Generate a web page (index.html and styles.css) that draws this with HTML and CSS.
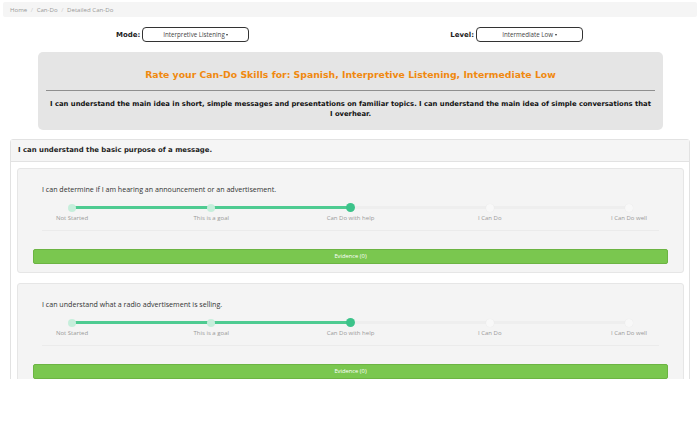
FILE: index.html
```html
<!DOCTYPE html>
<html>
<head>
<meta charset="utf-8">
<link rel="stylesheet" href="styles.css">
</head>
<body>
<div class="page">
  <div class="breadcrumb">Home <span class="sep">/</span> Can-Do <span class="sep">/</span> Detailed Can-Do</div>

  <div class="selectors">
    <div class="sel-group"><span class="sel-label">Mode:</span><div class="select">Interpretive Listening <span class="caret"></span></div></div>
    <div class="sel-group"><span class="sel-label">Level:</span><div class="select">Intermediate Low <span class="caret"></span></div></div>
  </div>

  <div class="jumbo">
    <h1 class="jumbo-title">Rate your Can-Do Skills for: Spanish, Interpretive Listening, Intermediate Low</h1>
    <div class="jumbo-rule"></div>
    <p class="jumbo-text">I can understand the main idea in short, simple messages and presentations on familiar topics. I can understand the main idea of simple conversations that I overhear.</p>
  </div>

  <div class="panel">
    <div class="panel-head">I can understand the basic purpose of a message.</div>
    <div class="panel-body">
      <div class="card">
        <div class="card-inner">
          <div class="stmt">I can determine if I am hearing an announcement or an advertisement.</div>
          <div class="scale">
            <div class="track"><div class="fill" style="width:50%"></div></div>
            <span class="dot done" style="left:0%"></span>
            <span class="dot done" style="left:25%"></span>
            <span class="dot current" style="left:50%"></span>
            <span class="dot" style="left:75%"></span>
            <span class="dot" style="left:100%"></span>
            <span class="lbl" style="left:0%">Not Started</span>
            <span class="lbl" style="left:25%">This is a goal</span>
            <span class="lbl" style="left:50%">Can Do with help</span>
            <span class="lbl" style="left:75%">I Can Do</span>
            <span class="lbl" style="left:100%">I Can Do well</span>
          </div>
          <div class="rule"></div>
        </div>
        <div class="evidence">Evidence (0)</div>
      </div>

      <div class="card">
        <div class="card-inner">
          <div class="stmt">I can understand what a radio advertisement is selling.</div>
          <div class="scale">
            <div class="track"><div class="fill" style="width:50%"></div></div>
            <span class="dot done" style="left:0%"></span>
            <span class="dot done" style="left:25%"></span>
            <span class="dot current" style="left:50%"></span>
            <span class="dot" style="left:75%"></span>
            <span class="dot" style="left:100%"></span>
            <span class="lbl" style="left:0%">Not Started</span>
            <span class="lbl" style="left:25%">This is a goal</span>
            <span class="lbl" style="left:50%">Can Do with help</span>
            <span class="lbl" style="left:75%">I Can Do</span>
            <span class="lbl" style="left:100%">I Can Do well</span>
          </div>
          <div class="rule"></div>
        </div>
        <div class="evidence">Evidence (0)</div>
      </div>
    </div>
  </div>
</div>
</body>
</html>
```

FILE: styles.css
```css
* { box-sizing: border-box; }
html, body { margin: 0; padding: 0; background: #fff; }
body { font-family: "Open Sans", "Liberation Sans", sans-serif; color: #333; }

.page { height: 379px; overflow: hidden; }

.breadcrumb {
  margin: 2px 3px 0 3px;
  height: 15px;
  line-height: 15px;
  padding-left: 7px;
  background: #f5f5f5;
  border-radius: 2px;
  font-size: 6.1px;
  color: #999;
}
.breadcrumb .sep { color: #ccc; padding: 0 2px; }

.selectors {
  display: flex;
  justify-content: space-between;
  padding: 0 117px 0 116px;
  margin-top: 10px;
}
.sel-group { display: flex; align-items: center; }
.sel-label {
  font-family: "DejaVu Sans", Verdana, sans-serif;
  font-weight: bold;
  font-size: 7px;
  color: #222;
  margin-right: 2px;
}
.select {
  width: 107px;
  height: 15px;
  border: 1px solid #333;
  border-radius: 4px;
  font-size: 6.2px;
  line-height: 13px;
  text-align: center;
  color: #444;
}
.caret {
  display: inline-block;
  width: 0; height: 0;
  border-left: 1.5px solid transparent;
  border-right: 1.5px solid transparent;
  border-top: 2px solid #333;
  vertical-align: middle;
}

.jumbo {
  margin: 10px 37px 0 38px;
  height: 78px;
  background: #e5e5e5;
  border-radius: 5px;
  padding: 17px 8px 0 8px;
  font-family: "DejaVu Sans", Verdana, sans-serif;
}
.jumbo-title {
  margin: 0;
  font-size: 9.3px;
  line-height: 12px;
  font-weight: bold;
  color: #f0890f;
  text-align: center;
}
.jumbo-rule { margin-top: 9px; border-top: 1px solid #8f8f8f; }
.jumbo-text {
  margin: 8px 0 0 0;
  padding: 0 3px;
  font-size: 6.8px;
  line-height: 10px;
  font-weight: bold;
  color: #111;
  text-align: center;
}

.panel {
  margin: 9px 10px 0 10px;
  border: 1px solid #e2e2e2;
  border-radius: 3px;
}
.panel-head {
  height: 22px;
  line-height: 21px;
  padding-left: 7px;
  background: #f5f5f5;
  border-bottom: 1px solid #e2e2e2;
  font-family: "DejaVu Sans", Verdana, sans-serif;
  font-weight: bold;
  font-size: 6.9px;
  color: #222;
}
.panel-body { padding: 6px 5px 0 6px; }

.card {
  background: #f4f4f4;
  border: 1px solid #e6e6e6;
  border-radius: 3px;
  padding: 15px 15px 8px 15px;
  margin-bottom: 10px;
}
.card-inner { margin: 0 9px; }
.stmt { font-size: 7.1px; line-height: 10px; color: #333; }

.scale {
  position: relative;
  margin: 11px 30px 0 30px;
  height: 19px;
}
.track {
  position: absolute;
  left: 0; right: 0; top: 1px;
  height: 3px;
  background: #eeeeee;
  border-radius: 2px;
}
.fill { height: 3px; background: #4ecb91; border-radius: 2px; }
.dot {
  position: absolute;
  top: -1.5px;
  width: 8px; height: 8px;
  margin-left: -4px;
  border-radius: 50%;
  background: #f8f8f8;
  box-shadow: 0 0 1px rgba(0,0,0,0.08);
}
.dot.done { background: #c6eedb; box-shadow: none; }
.dot.current { background: #3cc38a; box-shadow: none; width: 9px; height: 9px; margin-left: -4.5px; top: -2px; }
.lbl {
  position: absolute;
  top: 9px;
  transform: translateX(-50%);
  white-space: nowrap;
  font-size: 6px;
  line-height: 8px;
  color: #999;
}

.rule { margin-top: 6px; border-top: 1px solid #ebebeb; }

.evidence {
  margin-top: 18px;
  height: 15px;
  line-height: 13px;
  background: #7ac74f;
  border: 1px solid #6cb443;
  border-radius: 2px;
  text-align: center;
  font-size: 5.8px;
  color: #fff;
}
```
